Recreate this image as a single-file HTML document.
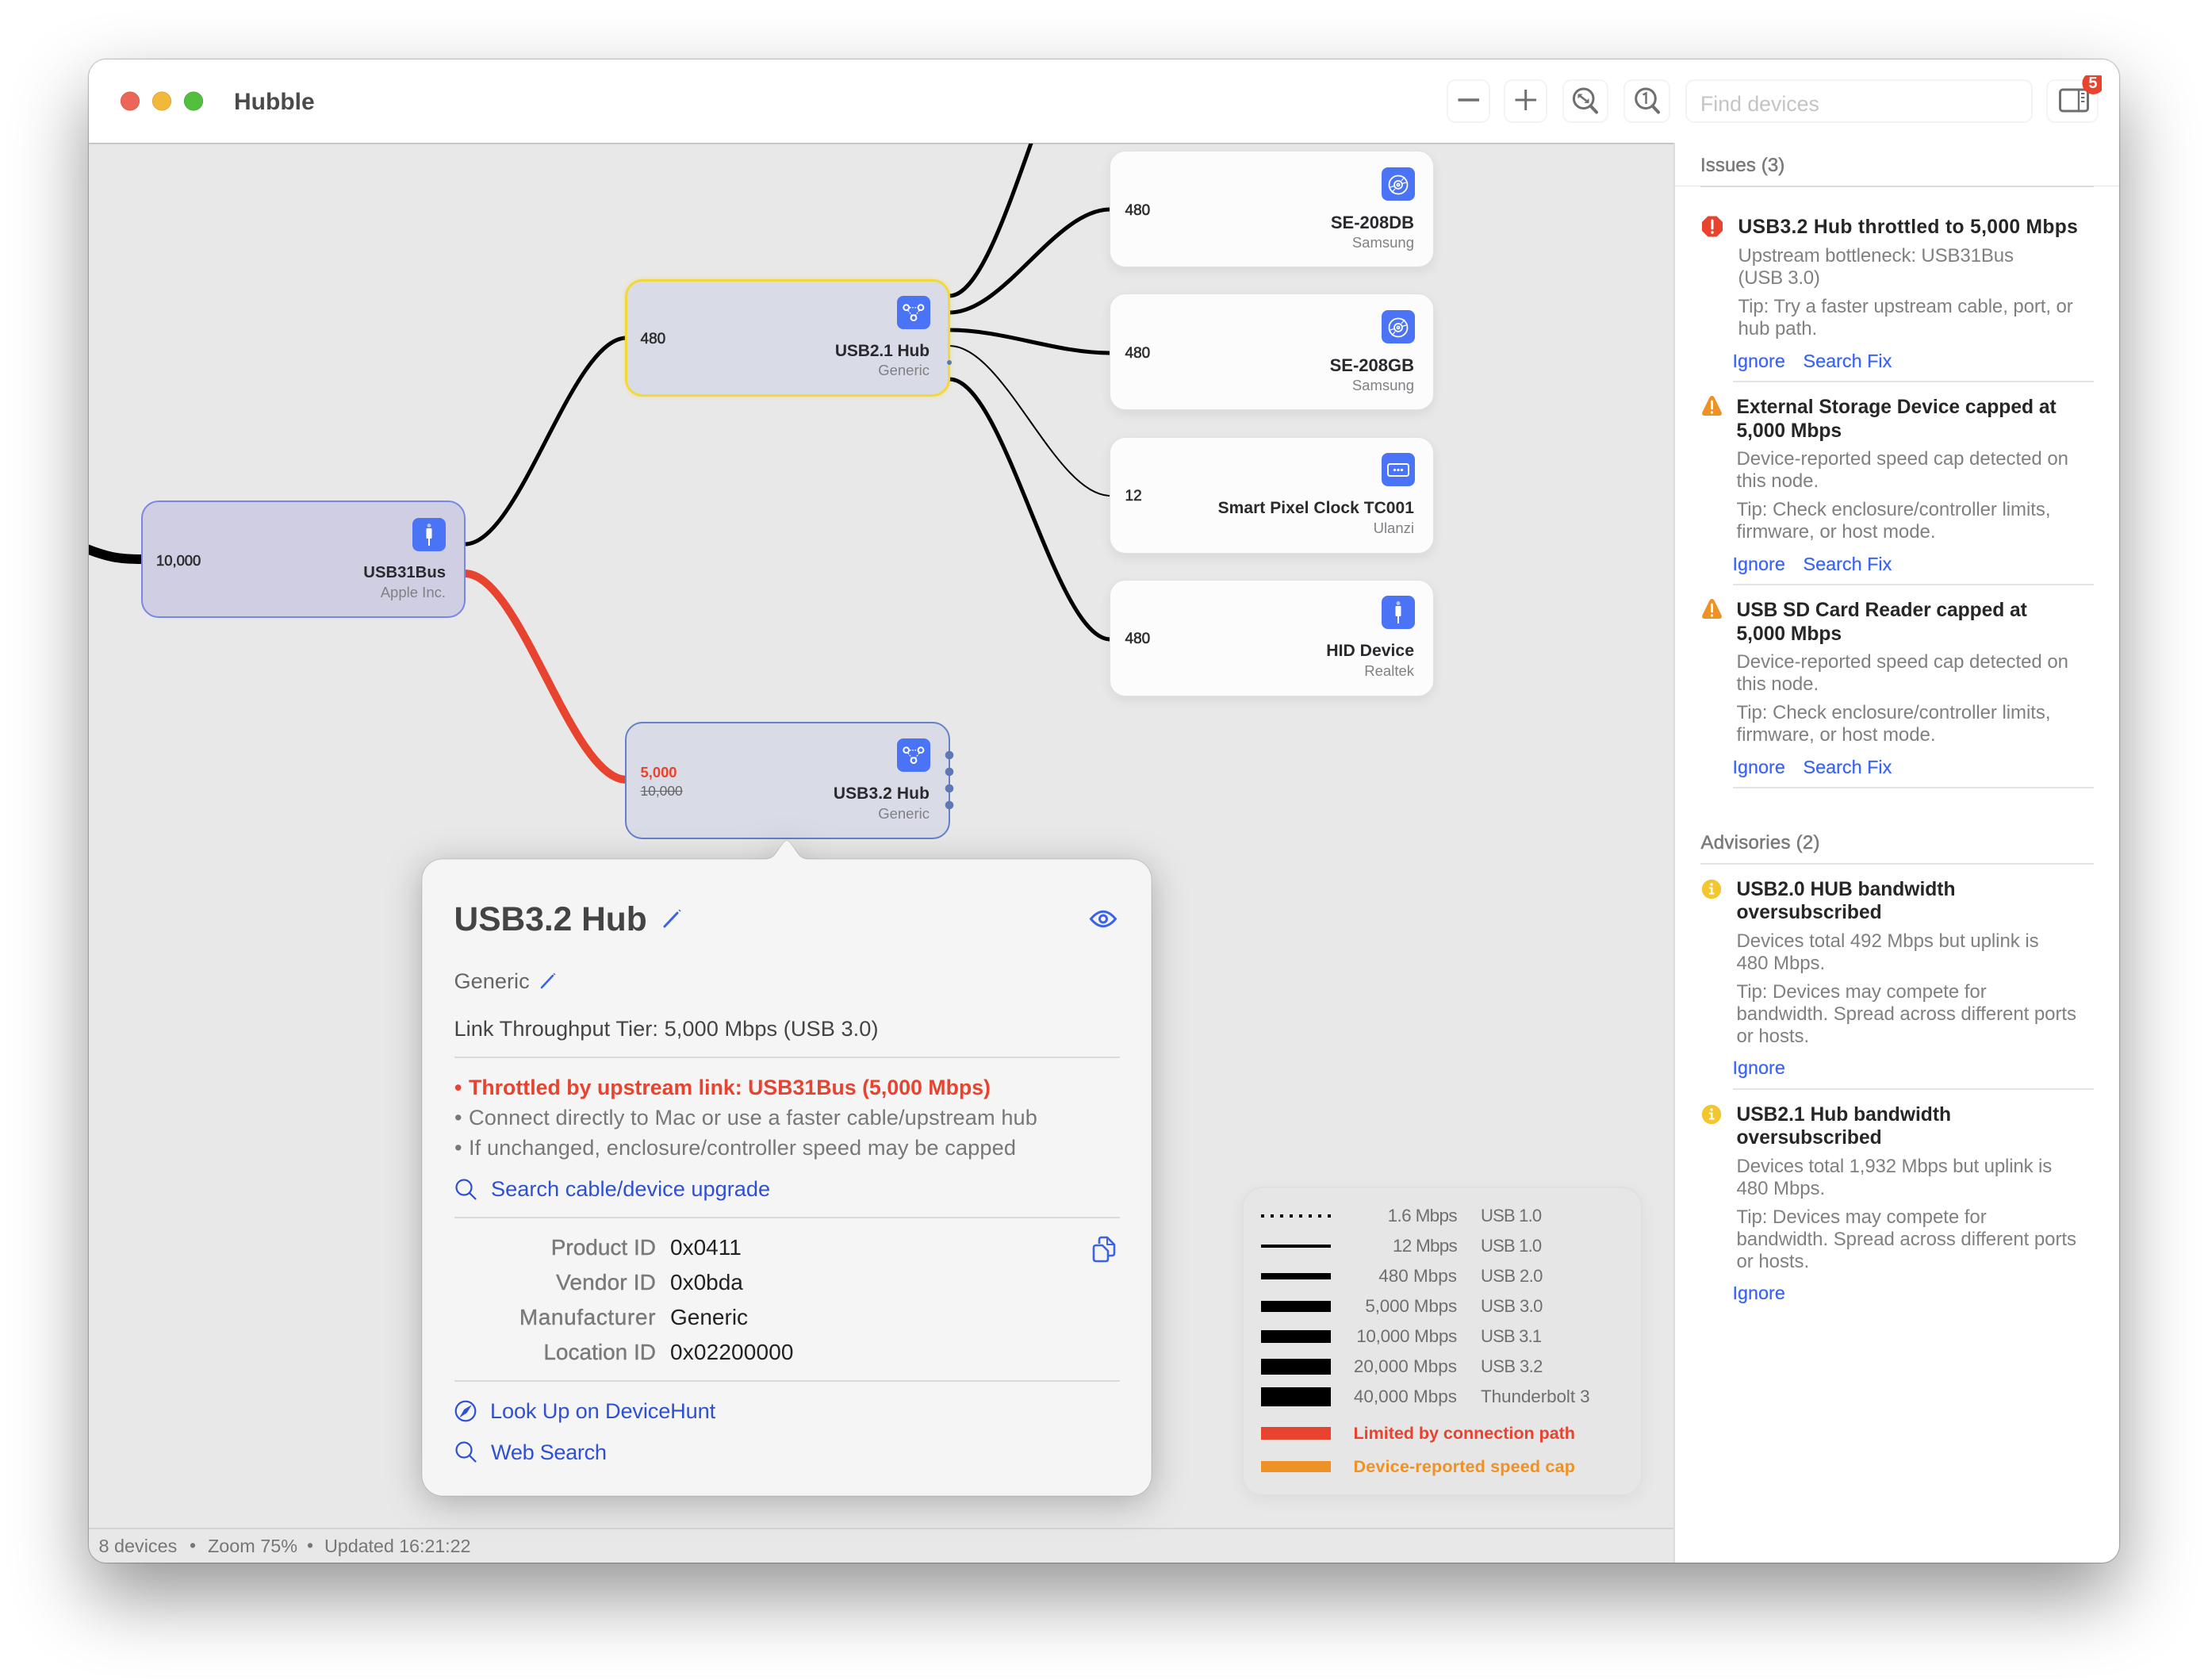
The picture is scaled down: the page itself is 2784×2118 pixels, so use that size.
<!DOCTYPE html>
<html lang="en"><head><meta charset="utf-8"><title>Hubble</title>
<style>
html,body{margin:0;padding:0;background:#fff}
body{position:relative;width:2784px;height:2118px;overflow:hidden;font-family:"Liberation Sans",Arial,sans-serif}
.a{position:absolute;box-sizing:border-box}
.t{position:absolute;white-space:nowrap;line-height:0}
.m{-webkit-text-stroke:.4px currentColor}
.b{font-weight:700}
.btn{position:absolute;box-sizing:border-box;top:100px;height:55px;border:2px solid #f3f3f3;border-radius:11px;background:#fff}
.node{position:absolute;box-sizing:border-box;width:409px;height:148px;border-radius:22px}
.card{position:absolute;box-sizing:border-box;left:1399px;width:409px;height:147px;border-radius:20px;background:#fcfcfc;border:1.5px solid #e2e2e2;box-shadow:0 5px 14px rgba(0,0,0,.07)}
.ic{position:absolute;width:42px;height:42px;border-radius:8px;background:#4a74f5;overflow:hidden}
.ic svg{display:block}
.spd{font-size:19px;color:#2e2e2e;margin-top:1.5px;-webkit-text-stroke:.6px #2e2e2e}
.nt{font-size:21px;font-weight:700;color:#2a2a2e;margin-top:1.5px}
.ns{font-size:18.5px;color:#808085}
.it{font-size:24.6px;font-weight:700;color:#262626;margin-top:1.5px}
.d{font-size:24px;color:#808080;letter-spacing:-.05px}
.l{font-size:23.4px;color:#3c64f4;-webkit-text-stroke:.25px currentColor}
.sh{font-size:24px;color:#7a7a7a;-webkit-text-stroke:.5px currentColor}
.pg{font-size:27.2px}
.pl{font-size:28px;color:#7a7a7a}
.pv{font-size:28px;color:#222}
.lg{font-size:22.5px;color:#6f6f6f}
.u{font-size:22px;letter-spacing:-.8px}
.sw{position:absolute;left:1590px;width:88px;background:#000}
</style></head><body>

<!-- window -->
<div class="a" style="left:112px;top:75px;width:2560px;height:1895px;border-radius:22px;background:#e8e8e8;box-shadow:0 42px 95px 0 rgba(0,0,0,.42),0 0 1px 1px rgba(0,0,0,.24)"></div>

<!-- canvas content clip -->
<div class="a" style="left:112px;top:75px;width:2560px;height:1895px;border-radius:22px;overflow:hidden">
  <div class="a" style="left:0;top:0;width:2560px;height:105px;background:#fff;box-shadow:0 1px 2px rgba(0,0,0,.28)"></div>
  <div class="a" style="left:0;top:1851px;width:1998px;height:44px;background:#e8e8e8;border-top:2px solid #d4d4d4"></div>
  <div class="a" style="left:1998px;top:105px;width:562px;height:1790px;background:#fff;border-left:2px solid #dcdcdc"></div>
</div>

<!-- links -->
<svg class="a" style="left:0;top:0" width="2784" height="2118" viewBox="0 0 2784 2118" fill="none">
  <defs><clipPath id="c"><rect x="112" y="181" width="1998" height="1746"/></clipPath></defs>
  <g clip-path="url(#c)" stroke="#000" stroke-linecap="butt">
    <path d="M100 688C135 703 150 705 180 705" stroke-width="12"/>
    <path d="M586 686C656 686 720 426 790 426" stroke-width="5"/>
    <path d="M586 723C656 723 720 983 790 983" stroke="#e8432f" stroke-width="10"/>
    <path d="M1197 373C1267 373 1330 -3 1400 -3" stroke-width="5"/>
    <path d="M1197 394C1267 394 1330 264 1400 264" stroke-width="5"/>
    <path d="M1197 416C1267 416 1330 445 1400 445" stroke-width="5"/>
    <path d="M1197 436C1267 436 1330 625 1400 625" stroke-width="2"/>
    <path d="M1197 478C1267 478 1330 806 1400 806" stroke-width="5"/>
  </g>
</svg>

<!-- USB31Bus -->
<div class="node" style="left:178px;top:631px;background:#d0cee3;border:2px solid #7b86e2"></div>
<div class="t spd" style="left:197px;top:705px;font-size:18.4px">10,000</div>
<div class="ic" style="left:520px;top:653px"><svg width="42" height="42" viewBox="0 0 42 42"><circle cx="21" cy="9.5" r="2.4" fill="#fff" opacity=".6"/><rect x="17.5" y="13" width="7" height="13" rx="1" fill="#fff"/><rect x="20" y="26" width="2" height="9" fill="#fff"/></svg></div>
<div class="t nt" style="right:2222px;top:720px;font-size:20.3px">USB31Bus</div>
<div class="t ns" style="right:2222px;top:747px">Apple Inc.</div>

<!-- USB2.1 Hub -->
<div class="node" style="left:788px;top:352px;width:410px;background:#d9dce7;border:3px solid #f3d83a;box-shadow:0 0 6px rgba(243,216,58,.45)"></div>
<div class="t spd" style="left:807.5px;top:426px">480</div>
<div class="ic" style="left:1131px;top:373px"><svg width="42" height="42" viewBox="0 0 42 42" fill="none" stroke="#fff"><g stroke-width="2"><circle cx="11.7" cy="14.7" r="3.4"/><circle cx="30" cy="14.7" r="3.4"/><circle cx="21" cy="27.7" r="3.4"/></g><path d="M16 14.7H26M14 18.5L18.500 24.500M28 18.500L23.500 24.500" stroke-width="1.500" stroke-dasharray="1.6 1.6"/></svg></div>
<div class="t nt" style="right:1612px;top:441px;letter-spacing:-.1px">USB2.1 Hub</div>
<div class="t ns" style="right:1612px;top:467px">Generic</div>
<svg class="a" style="left:1190px;top:450px" width="14" height="14"><circle cx="7" cy="7" r="3" fill="#5e77b5"/></svg>

<!-- USB3.2 Hub -->
<div class="node" style="left:788px;top:910px;width:410px;background:#d9dce7;border:2px solid #6680c4"></div>
<div class="t b" style="left:807.5px;top:974px;font-size:18.4px;color:#e8432f">5,000</div>
<div class="t" style="left:807.5px;top:997px;font-size:17.4px;color:#666;text-decoration:line-through">10,000</div>
<div class="ic" style="left:1131px;top:931px"><svg width="42" height="42" viewBox="0 0 42 42" fill="none" stroke="#fff"><g stroke-width="2"><circle cx="11.7" cy="14.7" r="3.4"/><circle cx="30" cy="14.7" r="3.4"/><circle cx="21" cy="27.7" r="3.4"/></g><path d="M16 14.7H26M14 18.500L18.500 24.500M28 18.500L23.500 24.500" stroke-width="1.500" stroke-dasharray="1.6 1.6"/></svg></div>
<div class="t nt" style="right:1612px;top:999px;letter-spacing:.1px">USB3.2 Hub</div>
<div class="t ns" style="right:1612px;top:1026px">Generic</div>
<svg class="a" style="left:1185px;top:940px" width="24" height="90" fill="#5e77b5"><circle cx="12" cy="12" r="5.3"/><circle cx="12" cy="33" r="5.3"/><circle cx="12" cy="54" r="5.3"/><circle cx="12" cy="75" r="5.3"/></svg>

<!-- device cards -->
<div class="card" style="top:190px"></div>
<div class="t spd" style="left:1418.5px;top:264px">480</div>
<div class="ic" style="left:1742px;top:211px"><svg width="42" height="42" viewBox="0 0 42 42" fill="none" stroke="#fff" stroke-width="1.8"><circle cx="21" cy="22" r="11.5"/><circle cx="21" cy="22" r="5"/><circle cx="21" cy="22" r="1.6"/><path d="M25 17L29 12M17 27L13 32M11 25L16 23.500M31 19L26 20.500" stroke-width="1.2"/></svg></div>
<div class="t nt" style="right:1001px;top:279px;font-size:22px">SE-208DB</div>
<div class="t ns" style="right:1001px;top:306px">Samsung</div>

<div class="card" style="top:370px"></div>
<div class="t spd" style="left:1418.5px;top:444px">480</div>
<div class="ic" style="left:1742px;top:391px"><svg width="42" height="42" viewBox="0 0 42 42" fill="none" stroke="#fff" stroke-width="1.8"><circle cx="21" cy="22" r="11.5"/><circle cx="21" cy="22" r="5"/><circle cx="21" cy="22" r="1.6"/><path d="M25 17L29 12M17 27L13 32M11 25L16 23.500M31 19L26 20.500" stroke-width="1.2"/></svg></div>
<div class="t nt" style="right:1001px;top:459px;font-size:22px">SE-208GB</div>
<div class="t ns" style="right:1001px;top:486px">Samsung</div>

<div class="card" style="top:551px"></div>
<div class="t spd" style="left:1418.5px;top:624px">12</div>
<div class="ic" style="left:1742px;top:571px"><svg width="42" height="42" viewBox="0 0 42 42" fill="none"><rect x="8" y="14" width="26" height="15" rx="2.5" stroke="#fff" stroke-width="2"/><g fill="#fff"><circle cx="16.5" cy="21.5" r="1.6"/><circle cx="21" cy="21.5" r="1.6"/><circle cx="25.5" cy="21.5" r="1.6"/></g></svg></div>
<div class="t nt" style="right:1001px;top:639px;letter-spacing:.05px">Smart Pixel Clock TC001</div>
<div class="t ns" style="right:1001px;top:666px">Ulanzi</div>

<div class="card" style="top:731px"></div>
<div class="t spd" style="left:1418.5px;top:804px">480</div>
<div class="ic" style="left:1742px;top:751px"><svg width="42" height="42" viewBox="0 0 42 42"><circle cx="21" cy="9.5" r="2.4" fill="#fff" opacity=".6"/><rect x="17.5" y="13" width="7" height="13" rx="1" fill="#fff"/><rect x="20" y="26" width="2" height="9" fill="#fff"/></svg></div>
<div class="t nt" style="right:1001px;top:819px;font-size:21.2px">HID Device</div>
<div class="t ns" style="right:1001px;top:846px">Realtek</div>

<!-- title bar -->
<svg class="a" style="left:140px;top:103px" width="130" height="50"><circle cx="24" cy="24.5" r="11.7" fill="#ec6559" stroke="#d65045" stroke-width=".7"/><circle cx="64" cy="24.5" r="11.7" fill="#f2b83c" stroke="#d89d2c" stroke-width=".7"/><circle cx="104" cy="24.5" r="11.7" fill="#52bf3f" stroke="#3fa832" stroke-width=".7"/></svg>
<div class="t b" style="left:295px;top:128.5px;font-size:30px;color:#4a4a4a">Hubble</div>

<div class="btn" style="left:1824px;width:55px"></div>
<div class="btn" style="left:1896px;width:55px"></div>
<div class="btn" style="left:1970px;width:58px"></div>
<div class="btn" style="left:2047px;width:59px"></div>
<div class="btn" style="left:2125px;width:438px"></div>
<div class="btn" style="left:2580px;width:66px"></div>
<div class="t" style="left:2144px;top:130.5px;font-size:26.7px;color:#c4c4c4">Find devices</div>

<svg class="a" style="left:1820px;top:95px" width="830" height="60" viewBox="1820 95 830 60" fill="none" stroke="#6f6f6f">
  <path d="M1838.5 126H1865" stroke-width="3.4"/>
  <path d="M1910.5 126H1937M1923.7 113V139" stroke-width="3"/>
  <circle cx="1996.7" cy="124.3" r="12.3" stroke-width="3"/>
  <path d="M2005.5 133.5L2013 141.5" stroke-width="4" stroke-linecap="round"/>
  <path d="M1991 120L2002 128.5" stroke-width="2.6"/>
  <path d="M1989.5 124.5L1989.5 118.500L1995.500 118.500ZM2003.500 124L2003.500 130L1997.500 130Z" fill="#6f6f6f" stroke="none"/>
  <circle cx="2075" cy="124.3" r="12.3" stroke-width="3"/>
  <path d="M2083.5 133.5L2091 141.5" stroke-width="4" stroke-linecap="round"/>
  <path d="M2071.5 119.5L2075.500 117.500V131" stroke-width="2.4"/>
  <rect x="2597.5" y="113" width="35" height="27" rx="3.5" stroke-width="3"/>
  <path d="M2621 113V140" stroke-width="2.4"/>
  <g stroke="none" fill="#6f6f6f"><rect x="2624" y="117" width="4.4" height="2"/><rect x="2624" y="122" width="4.4" height="2"/><rect x="2624" y="127" width="4.4" height="2"/></g>
  <circle cx="2639.4" cy="105" r="14" fill="#e8432f" stroke="none"/>
</svg>
<div class="t b" style="left:2633.4px;top:105px;font-size:20px;color:#fff">5</div>

<!-- status -->
<div class="t" style="left:124.5px;top:1949px;font-size:23.4px;color:#777">8 devices</div>
<div class="t" style="left:239px;top:1948px;font-size:23px;color:#777">•</div>
<div class="t" style="left:262px;top:1949px;font-size:23.4px;color:#777">Zoom 75%</div>
<div class="t" style="left:387px;top:1948px;font-size:23px;color:#777">•</div>
<div class="t" style="left:409px;top:1949px;font-size:23.4px;color:#777;letter-spacing:-.1px">Updated 16:21:22</div>

<!-- legend -->
<div class="a" style="left:1566px;top:1496px;width:505px;height:390px;border-radius:26px;background:#e6e6e6;border:2px solid #e0e0e0;box-shadow:0 6px 22px rgba(0,0,0,.05)"></div>
<svg class="a" style="left:1590px;top:1530px" width="88" height="6"><path d="M0 3H88" stroke="#000" stroke-width="4" stroke-dasharray="4 8"/></svg>
<div class="sw" style="top:1569px;height:4px"></div>
<div class="sw" style="top:1605px;height:8px"></div>
<div class="sw" style="top:1640px;height:14px"></div>
<div class="sw" style="top:1677px;height:16px"></div>
<div class="sw" style="top:1713px;height:20px"></div>
<div class="sw" style="top:1749px;height:24px"></div>
<div class="sw" style="top:1799px;height:16px;background:#e8432f"></div>
<div class="sw" style="top:1842px;height:14px;background:#ee9126"></div>
<div class="t lg" style="right:947px;top:1533px;letter-spacing:-.65px">1.6 Mbps</div><div class="t lg u" style="left:1867px;top:1533px">USB 1.0</div>
<div class="t lg" style="right:947px;top:1571px;letter-spacing:-.75px">12 Mbps</div><div class="t lg u" style="left:1867px;top:1571px">USB 1.0</div>
<div class="t lg" style="right:947px;top:1609px">480 Mbps</div><div class="t lg u" style="left:1867px;top:1609px;letter-spacing:-.6px">USB 2.0</div>
<div class="t lg" style="right:947px;top:1647px;letter-spacing:-.2px">5,000 Mbps</div><div class="t lg u" style="left:1867px;top:1647px;letter-spacing:-.6px">USB 3.0</div>
<div class="t lg" style="right:947px;top:1685px;letter-spacing:-.3px">10,000 Mbps</div><div class="t lg u" style="left:1867px;top:1685px">USB 3.1</div>
<div class="t lg" style="right:947px;top:1723px">20,000 Mbps</div><div class="t lg u" style="left:1867px;top:1723px;letter-spacing:-.6px">USB 3.2</div>
<div class="t lg" style="right:947px;top:1761px">40,000 Mbps</div><div class="t lg" style="left:1867px;top:1761px;letter-spacing:-.1px">Thunderbolt 3</div>
<div class="t b" style="left:1706.5px;top:1807px;font-size:21.6px;color:#e8432f;letter-spacing:-.05px">Limited by connection path</div>
<div class="t b" style="left:1706.5px;top:1849px;font-size:21.6px;color:#ee9126;letter-spacing:.14px">Device-reported speed cap</div>

<!-- popover -->
<svg class="a" style="left:0;top:0;overflow:visible;filter:drop-shadow(0 8px 22px rgba(0,0,0,.26))" width="2784" height="2118" fill="none"><path d="M558 1083H963C974 1083 977 1078 982 1070L988 1062Q992 1057 996 1062L1002 1070C1007 1078 1010 1083 1021 1083H1426A26 26 0 0 1 1452 1109V1860A26 26 0 0 1 1426 1886H558A26 26 0 0 1 532 1860V1109A26 26 0 0 1 558 1083Z" fill="#f5f5f5" stroke="rgba(0,0,0,.14)" stroke-width="1"/></svg>

<div class="t b" style="left:572.5px;top:1159.5px;font-size:42.5px;color:#444">USB3.2 Hub</div>
<div class="t pg" style="left:572.5px;top:1237px;color:#666">Generic</div>
<div class="t pg" style="left:572.5px;top:1297px;color:#444;letter-spacing:.05px">Link Throughput Tier: 5,000 Mbps (USB 3.0)</div>
<div class="a" style="left:573px;top:1332px;width:839px;height:2px;background:#d9d9d9"></div>
<div class="t b" style="left:573px;top:1371px;font-size:26.6px;color:#e8432f">•</div>
<div class="t b" style="left:591px;top:1371px;font-size:26.6px;color:#e8432f;letter-spacing:.07px">Throttled by upstream link: USB31Bus (5,000 Mbps)</div>
<div class="t pg" style="left:573px;top:1409px;color:#777">•</div>
<div class="t pg" style="left:591px;top:1409px;color:#777;letter-spacing:.09px">Connect directly to Mac or use a faster cable/upstream hub</div>
<div class="t pg" style="left:573px;top:1447px;color:#777">•</div>
<div class="t pg" style="left:591px;top:1447px;color:#777;letter-spacing:.1px">If unchanged, enclosure/controller speed may be capped</div>
<div class="t pg" style="left:619px;top:1499px;color:#2f50d2">Search cable/device upgrade</div>
<div class="a" style="left:573px;top:1534px;width:839px;height:2px;background:#d9d9d9"></div>
<div class="t pl m" style="right:1957px;top:1573px">Product ID</div><div class="t pv" style="left:845px;top:1573px">0x0411</div>
<div class="t pl m" style="right:1957px;top:1617px;letter-spacing:.15px">Vendor ID</div><div class="t pv" style="left:845px;top:1617px">0x0bda</div>
<div class="t pl m" style="right:1957px;top:1661px;letter-spacing:.6px">Manufacturer</div><div class="t pv" style="left:845px;top:1661px">Generic</div>
<div class="t pl m" style="right:1957px;top:1705px">Location ID</div><div class="t pv" style="left:845px;top:1705px;letter-spacing:.15px">0x02200000</div>
<div class="a" style="left:573px;top:1740px;width:839px;height:2px;background:#d9d9d9"></div>
<div class="t pg" style="left:618px;top:1779px;color:#2f50d2;letter-spacing:-.15px">Look Up on DeviceHunt</div>
<div class="t pg" style="left:619px;top:1831px;color:#2f50d2;letter-spacing:-.35px">Web Search</div>

<svg class="a" style="left:0;top:0" width="2784" height="2118" fill="none" stroke="#3b63e8">
  <path d="M838 1168L854 1151" stroke-width="3" stroke-linecap="round"/><path d="M856.5 1148.5L857.5 1147.5" stroke-width="3"/>
  <path d="M683 1245L697 1230" stroke-width="2.6" stroke-linecap="round"/><path d="M698.5 1228.5L699.5 1227.5" stroke-width="2.6"/>
  <path d="M1375.5 1158.5Q1391 1140 1406.5 1158.5Q1391 1177 1375.5 1158.5Z" stroke-width="3"/><circle cx="1391" cy="1158.5" r="4.5" stroke-width="3"/>
  <g stroke="#2f50d2" stroke-width="2.2">
    <circle cx="585" cy="1497" r="9.5"/><path d="M592 1504L599.5 1511.5" stroke-linecap="round"/>
    <circle cx="587" cy="1779" r="12.3"/><path d="M594 1772L588.5 1781L580 1786.5L585.5 1777Z" fill="#2f50d2" stroke-width=".6"/>
    <circle cx="585" cy="1828" r="9.5"/><path d="M592 1835L599.5 1842.5" stroke-linecap="round"/>
  </g>
  <g stroke-width="2.6" stroke-linejoin="round">
    <path d="M1386 1568V1563Q1386 1560 1389 1560H1396L1405 1569V1580Q1405 1583 1402 1583H1398"/>
    <path d="M1396 1560V1569H1405" stroke-width="2"/>
    <path d="M1382 1570H1390L1397 1577V1587Q1397 1590 1394 1590H1382Q1379 1590 1379 1587V1573Q1379 1570 1382 1570Z"/>
  </g>
  <!-- sidebar status icons -->
  <path d="M2153.5 272.5H2164.5L2172 280V291L2164.5 298.5H2153.5L2146 291V280Z" fill="#e8432f" stroke="none"/>
  <path d="M2159 278V288" stroke="#fff" stroke-width="3" stroke-linecap="round"/><circle cx="2159" cy="293" r="1.7" fill="#fff" stroke="none"/>
  <path d="M2158.5 499Q2160.5 499 2162 502L2170.5 519.5Q2172 524 2167.5 524H2149.5Q2145 524 2146.5 519.5L2155 502Q2156.5 499 2158.5 499Z" fill="#ee9126" stroke="none"/>
  <path d="M2158.5 506V515" stroke="#fff" stroke-width="2.8" stroke-linecap="round"/><circle cx="2158.5" cy="520" r="1.6" fill="#fff" stroke="none"/>
  <path d="M2158.5 755Q2160.5 755 2162 758L2170.5 775.5Q2172 780 2167.5 780H2149.5Q2145 780 2146.5 775.5L2155 758Q2156.5 755 2158.5 755Z" fill="#ee9126" stroke="none"/>
  <path d="M2158.5 762V771" stroke="#fff" stroke-width="2.8" stroke-linecap="round"/><circle cx="2158.5" cy="776" r="1.6" fill="#fff" stroke="none"/>
  <g stroke="none"><circle cx="2158" cy="1121" r="12.2" fill="#f2c62f"/><circle cx="2158" cy="1115" r="1.8" fill="#fff"/><path d="M2155 1118.500H2159.400V1125.500H2161.400V1127.500H2155V1125.500H2157V1120.500H2155Z" fill="#fff"/></g>
  <g stroke="none"><circle cx="2158" cy="1405" r="12.2" fill="#f2c62f"/><circle cx="2158" cy="1399" r="1.8" fill="#fff"/><path d="M2155 1402.500H2159.400V1409.500H2161.400V1411.500H2155V1409.500H2157V1404.500H2155Z" fill="#fff"/></g>
</svg>

<!-- sidebar -->
<div class="t sh" style="left:2144px;top:209px;letter-spacing:.1px">Issues (3)</div>
<div class="a" style="left:2112px;top:234px;width:560px;height:1px;background:#e4e4e4"></div>
<div class="a" style="left:2144px;top:234px;width:496px;height:2px;background:#dcdcdc"></div>

<div class="t it" style="left:2191.5px;top:285px;letter-spacing:.35px">USB3.2 Hub throttled to 5,000 Mbps</div>
<div class="t d" style="left:2191.5px;top:323px;letter-spacing:-.12px">Upstream bottleneck: USB31Bus</div>
<div class="t d" style="left:2191.5px;top:351px;letter-spacing:-.25px">(USB 3.0)</div>
<div class="t d" style="left:2191.5px;top:387px;letter-spacing:-.09px">Tip: Try a faster upstream cable, port, or</div>
<div class="t d" style="left:2191.5px;top:415px">hub path.</div>
<div class="t l" style="left:2184.5px;top:454.5px">Ignore</div><div class="t l" style="left:2273.5px;top:454.5px">Search Fix</div>
<div class="a" style="left:2184.5px;top:480px;width:455.5px;height:2px;background:#e4e4e4"></div>

<div class="t it" style="left:2189.5px;top:512px">External Storage Device capped at</div>
<div class="t it" style="left:2189.5px;top:542px">5,000 Mbps</div>
<div class="t d" style="left:2189.5px;top:579px">Device-reported speed cap detected on</div>
<div class="t d" style="left:2189.5px;top:607px">this node.</div>
<div class="t d" style="left:2189.5px;top:643px">Tip: Check enclosure/controller limits,</div>
<div class="t d" style="left:2189.5px;top:671px">firmware, or host mode.</div>
<div class="t l" style="left:2184.5px;top:710.5px">Ignore</div><div class="t l" style="left:2273.5px;top:710.5px">Search Fix</div>
<div class="a" style="left:2184.5px;top:736px;width:455.5px;height:2px;background:#e4e4e4"></div>

<div class="t it" style="left:2189.5px;top:768px;letter-spacing:-.05px">USB SD Card Reader capped at</div>
<div class="t it" style="left:2189.5px;top:798px">5,000 Mbps</div>
<div class="t d" style="left:2189.5px;top:835px">Device-reported speed cap detected on</div>
<div class="t d" style="left:2189.5px;top:863px">this node.</div>
<div class="t d" style="left:2189.5px;top:899px">Tip: Check enclosure/controller limits,</div>
<div class="t d" style="left:2189.5px;top:927px">firmware, or host mode.</div>
<div class="t l" style="left:2184.5px;top:966.5px">Ignore</div><div class="t l" style="left:2273.5px;top:966.5px">Search Fix</div>
<div class="a" style="left:2184.5px;top:992px;width:455.5px;height:2px;background:#e4e4e4"></div>

<div class="t sh" style="left:2144.5px;top:1063px;letter-spacing:.25px">Advisories (2)</div>
<div class="a" style="left:2144px;top:1088px;width:496px;height:2px;background:#e4e4e4"></div>

<div class="t it" style="left:2189.5px;top:1120px">USB2.0 HUB bandwidth</div>
<div class="t it" style="left:2189.5px;top:1149.5px">oversubscribed</div>
<div class="t d" style="left:2189.5px;top:1186.5px">Devices total 492 Mbps but uplink is</div>
<div class="t d" style="left:2189.5px;top:1214.5px">480 Mbps.</div>
<div class="t d" style="left:2189.5px;top:1250.5px">Tip: Devices may compete for</div>
<div class="t d" style="left:2189.5px;top:1278.5px">bandwidth. Spread across different ports</div>
<div class="t d" style="left:2189.5px;top:1306.5px">or hosts.</div>
<div class="t l" style="left:2184.5px;top:1346px">Ignore</div>
<div class="a" style="left:2184.5px;top:1372px;width:455.5px;height:2px;background:#e4e4e4"></div>

<div class="t it" style="left:2189.5px;top:1404px">USB2.1 Hub bandwidth</div>
<div class="t it" style="left:2189.5px;top:1433.5px">oversubscribed</div>
<div class="t d" style="left:2189.5px;top:1470.5px;letter-spacing:-.14px">Devices total 1,932 Mbps but uplink is</div>
<div class="t d" style="left:2189.5px;top:1498.5px">480 Mbps.</div>
<div class="t d" style="left:2189.5px;top:1534.5px">Tip: Devices may compete for</div>
<div class="t d" style="left:2189.5px;top:1562.5px">bandwidth. Spread across different ports</div>
<div class="t d" style="left:2189.5px;top:1590.5px">or hosts.</div>
<div class="t l" style="left:2184.5px;top:1630px">Ignore</div>

</body></html>
